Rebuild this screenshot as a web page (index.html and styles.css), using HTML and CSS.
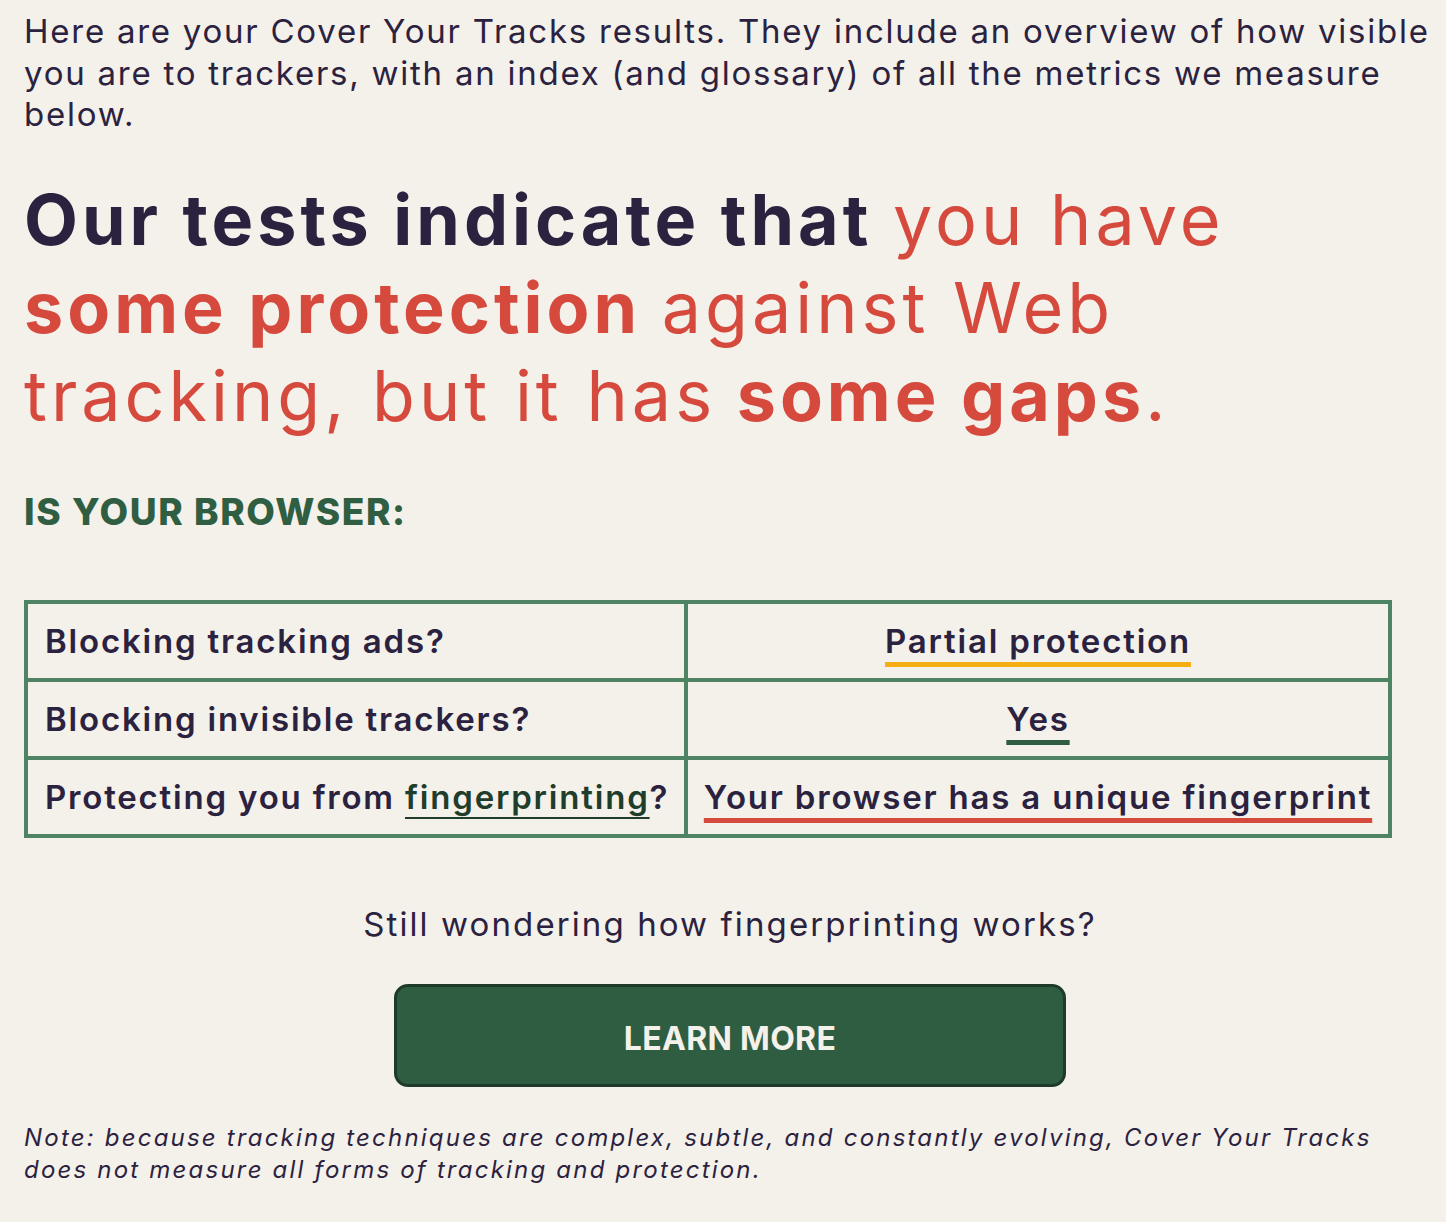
FILE: index.html
```html
<!DOCTYPE html>
<html lang="en">
<head>
<meta charset="utf-8">
<title>Cover Your Tracks results</title>
<link rel="stylesheet" href="styles.css">
</head>
<body>
<main class="results">
  <p class="intro">Here are your Cover Your Tracks results. They include an overview of how visible you are to trackers, with an index (and glossary) of all the metrics we measure below.</p>
  <h1 class="verdict">Our tests indicate that <span class="red">you have</span> <strong class="red-b">some protection</strong> <span class="red">against Web</span> <span class="red">tracking, but it has</span> <strong class="red-b">some gaps</strong><span class="red">.</span></h1>
  <h2 class="subhead">IS YOUR BROWSER:</h2>
  <table class="summary">
    <tr>
      <td class="q">Blocking tracking ads?</td>
      <td class="a"><span class="mark partial">Partial protection</span></td>
    </tr>
    <tr>
      <td class="q">Blocking invisible trackers?</td>
      <td class="a"><span class="mark yes">Yes</span></td>
    </tr>
    <tr>
      <td class="q">Protecting you from <a class="glossary" href="#">fingerprinting</a>?</td>
      <td class="a"><span class="mark unique">Your browser has a unique fingerprint</span></td>
    </tr>
  </table>
  <p class="wonder">Still wondering how fingerprinting works?</p>
  <div class="cta"><a class="btn" href="#">LEARN MORE</a></div>
  <p class="note">Note: because tracking techniques are complex, subtle, and constantly evolving, Cover Your Tracks does not measure all forms of tracking and protection.</p>
</main>
</body>
</html>
```
FILE: styles.css
```css
html, body {
  margin: 0;
  padding: 0;
  background: #f4f0ea;
}
body {
  font-family: Inter, "Open Sans", sans-serif;
  color: #2b2240;
}
.results {
  padding: 11px 10px 0 24px;
}
.intro {
  margin: 0;
  font-size: 33px;
  line-height: 41.5px;
  letter-spacing: 1.75px;
}
.verdict {
  margin: 40px 0 0;
  font-size: 70px;
  line-height: 88px;
  font-weight: 700;
  letter-spacing: 4px;
}
.verdict .red {
  color: #d6493d;
  font-weight: 400;
}
.verdict .red-b {
  color: #d6493d;
  font-weight: 700;
}
.subhead {
  margin: 50px 0 0;
  font-size: 37px;
  line-height: 44px;
  color: #2f5e42;
  font-weight: 800;
  letter-spacing: 1.6px;
}
.summary {
  margin-top: 66px;
  width: 1368px;
  border-collapse: collapse;
  table-layout: fixed;
}
.summary td {
  border: 4px solid #4e8464;
  height: 78px;
  font-size: 33px;
  font-weight: 600;
  letter-spacing: 1.8px;
  white-space: nowrap;
  box-sizing: border-box;
}
.summary td.q {
  width: 660px;
  padding: 0 8px 0 17px;
}
.summary td.a {
  text-align: center;
  padding: 0 8px;
}
.glossary {
  color: #1f3d2b;
  text-decoration: underline;
  text-decoration-thickness: 2px;
  text-underline-offset: 8px;
  text-decoration-skip-ink: none;
}
.mark {
  text-decoration: underline;
  text-decoration-thickness: 5px;
  text-underline-offset: 9px;
  text-decoration-skip-ink: none;
}
.mark.partial { text-decoration-color: #f7ae14; }
.mark.yes { text-decoration-color: #2f5d42; }
.mark.unique { text-decoration-color: #d6493d; }
.wonder {
  margin: 65px 0 0;
  text-align: center;
  font-size: 33px;
  line-height: 42px;
  letter-spacing: 2.1px;
}
.cta {
  display: flex;
  justify-content: center;
  margin-top: 39px;
}
.btn {
  display: flex;
  align-items: center;
  justify-content: center;
  box-sizing: border-box;
  width: 672px;
  height: 103px;
  padding-top: 6px;
  background: #2f5d42;
  border: 3px solid #1e3b29;
  border-radius: 14px;
  color: #f4f0ea;
  text-decoration: none;
  font-size: 32px;
  font-weight: 700;
  letter-spacing: 0.3px;
}
.note {
  margin: 35px 0 0;
  font-size: 24px;
  line-height: 32px;
  font-style: italic;
  letter-spacing: 2.2px;
}
```
